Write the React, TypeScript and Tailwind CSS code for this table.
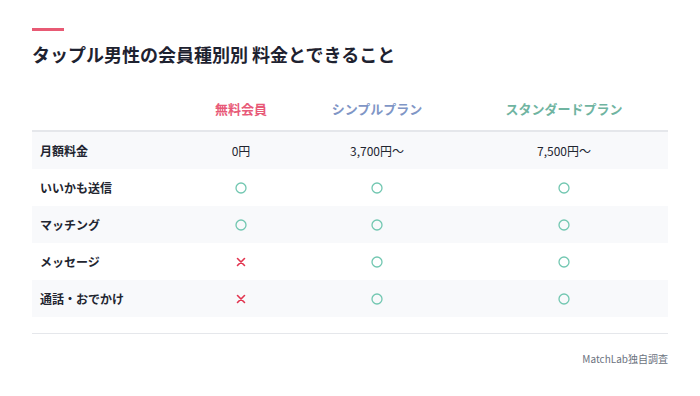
import React from 'react';

type Mark = 'o' | 'x' | string;

const rows: { label: string; cells: Mark[] }[] = [
  { label: '月額料金', cells: ['0円', '3,700円〜', '7,500円〜'] },
  { label: 'いいかも送信', cells: ['o', 'o', 'o'] },
  { label: 'マッチング', cells: ['o', 'o', 'o'] },
  { label: 'メッセージ', cells: ['x', 'o', 'o'] },
  { label: '通話・おでかけ', cells: ['x', 'o', 'o'] },
];

const grid = 'grid grid-cols-[156px_106px_166px_208px]';

function Cell({ value }: { value: Mark }) {
  if (value === 'o') {
    return (
      <svg width="12" height="12" viewBox="0 0 12 12">
        <circle cx="6" cy="6" r="5" fill="none" stroke="#72c7b1" strokeWidth="1.3" />
      </svg>
    );
  }
  if (value === 'x') {
    return (
      <svg width="10" height="10" viewBox="0 0 10 10">
        <path d="M1.5 1.5 L8.5 8.5 M8.5 1.5 L1.5 8.5" stroke="#e2344f" strokeWidth="1.6" strokeLinecap="round" />
      </svg>
    );
  }
  return <span className="text-[12px] text-[#222530]">{value}</span>;
}

export default function App() {
  return (
    <div
      className="w-[700px] h-[396px] bg-white px-8 pt-[28px]"
      style={{ fontFamily: '"Noto Sans CJK JP", "Noto Sans", sans-serif' }}
    >
      <div className="w-8 h-[3px] bg-[#e85a74]" />
      <h1 className="mt-[10px] text-[18px] leading-[26px] font-bold text-[#1e2230]">
        タップル男性の会員種別別 料金とできること
      </h1>

      <div className="mt-[21px] w-[636px]">
        <div className={`${grid} h-[44px] items-center border-b-2 border-[#e5e7eb] text-[13px] font-bold`}>
          <div />
          <div className="text-center text-[#e85a78]">無料会員</div>
          <div className="text-center text-[#7f96c6]">シンプルプラン</div>
          <div className="text-center text-[#6fb4a1]">スタンダードプラン</div>
        </div>
        {rows.map((row, i) => (
          <div
            key={row.label}
            className={`${grid} h-[37px] items-center ${i % 2 === 0 ? 'bg-[#f8f9fb]' : 'bg-white'}`}
          >
            <div className="pl-2 text-[12px] font-bold text-[#222530]">{row.label}</div>
            {row.cells.map((c, j) => (
              <div key={j} className="flex justify-center items-center">
                <Cell value={c} />
              </div>
            ))}
          </div>
        ))}
        <div className="mt-4 border-t border-[#e5e7eb]" />
        <p className="mt-[17px] text-right text-[10px] text-[#6b7280]">MatchLab独自調査</p>
      </div>
    </div>
  );
}
